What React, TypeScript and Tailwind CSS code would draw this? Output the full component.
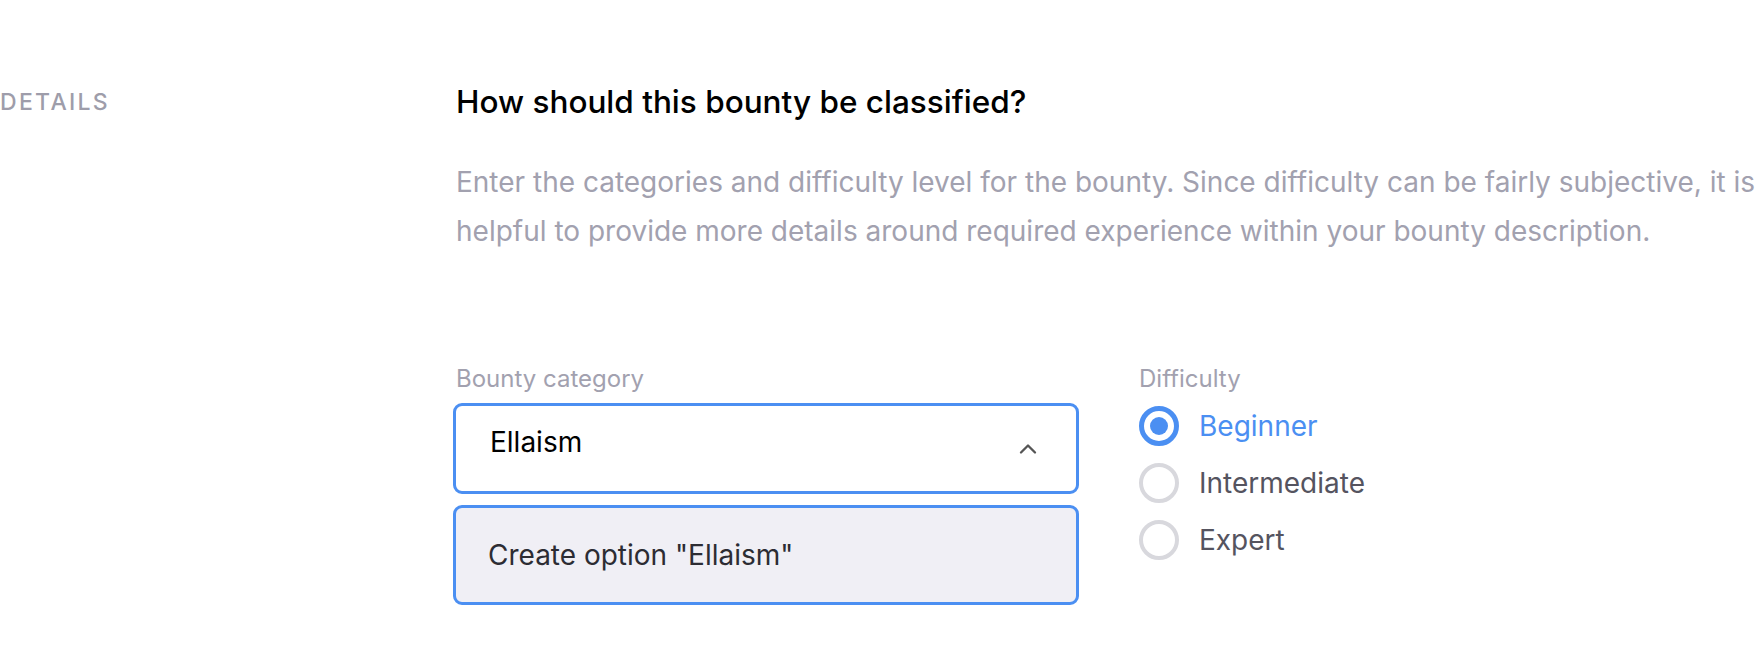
import { ChevronUp } from "lucide-react";

const options = ["Beginner", "Intermediate", "Expert"];

function Radio({ label, checked }: { label: string; checked?: boolean }) {
  return (
    <label className="flex items-center gap-[20px] h-[40px]">
      {checked ? (
        <span className="w-[40px] h-[40px] rounded-full border-[5px] border-[#4b8ff2] flex items-center justify-center">
          <span className="w-[18px] h-[18px] rounded-full bg-[#4b8ff2]" />
        </span>
      ) : (
        <span className="w-[40px] h-[40px] rounded-full border-[4px] border-[#d8d8dd]" />
      )}
      <span className={checked ? "text-[#4b8ff2] text-[28px]" : "text-[#55545f] text-[28px]"}>{label}</span>
    </label>
  );
}

export default function App() {
  return (
    <div className="w-[1756px] h-[648px] bg-white overflow-hidden font-['Inter',sans-serif]">
      <div className="flex pt-[82px]">
        {/* Left label */}
        <div className="w-[456px] shrink-0">
          <h3 className="text-[23px] leading-[40px] font-medium tracking-[0.1em] text-[#9e9daa]">DETAILS</h3>
        </div>

        {/* Right content */}
        <div className="w-[1300px] shrink-0">
          <h2 className="text-[31.5px] leading-[40px] font-medium text-black">How should this bounty be classified?</h2>
          <p className="mt-[36px] text-[28px] leading-[49px] text-[#a2a1af]">
            Enter the categories and difficulty level for the bounty. Since difficulty can be fairly subjective, it is helpful to provide more details around required experience within your bounty description.
          </p>

          <div className="mt-[107px] flex gap-[60px] -ml-[3px]">
            <div className="w-[626px]">
              <div className="text-[24px] leading-[32px] text-[#a2a1af] ml-[3px]">Bounty category</div>
              <div className="mt-[8px] h-[91px] rounded-[9px] border-[3px] border-[#4b8ff2] flex items-center justify-between pl-[34px] pr-[34px]">
                <span className="text-[28px] leading-[40px] mb-[14px] text-black">Ellaism</span>
                <ChevronUp className="w-[28px] h-[28px] text-[#555]" strokeWidth={2} />
              </div>
              <div className="mt-[11px] h-[100px] rounded-[9px] border-[3px] border-[#4b8ff2] bg-[#f0eff5] flex items-center pl-[32px]">
                <span className="text-[28px] text-[#2c2c33]">Create option "Ellaism"</span>
              </div>
            </div>

            <div>
              <div className="text-[24px] leading-[32px] text-[#a2a1af]">Difficulty</div>
              <div className="mt-[11px] flex flex-col gap-[17px]">
                {options.map((o, i) => (
                  <Radio key={o} label={o} checked={i === 0} />
                ))}
              </div>
            </div>
          </div>
        </div>
      </div>
    </div>
  );
}
